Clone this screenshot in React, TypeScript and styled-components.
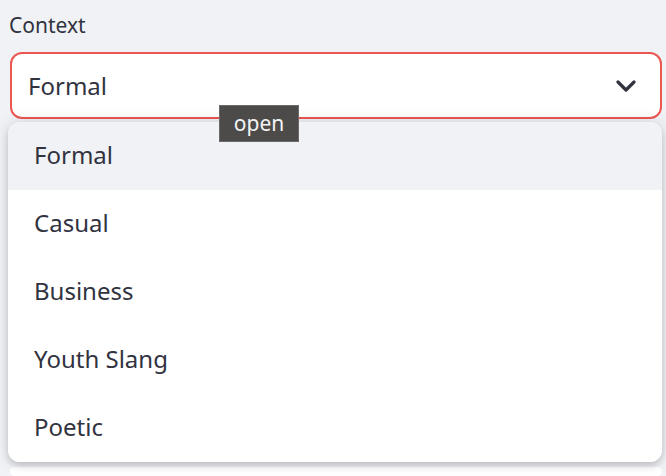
import React from "react";
import styled, { createGlobalStyle } from "styled-components";

const Global = createGlobalStyle`
  html, body { margin: 0; padding: 0; }
  body {
    background: #f0f2f6;
    font-family: "Noto Sans", "Open Sans", sans-serif;
    color: #31333f;
    overflow: hidden;
  }
`;

const Page = styled.div`
  width: 666px;
  height: 476px;
  box-sizing: border-box;
  padding: 10px 4px 0 10px;
  display: flex;
  flex-direction: column;
`;

const Label = styled.div`
  font-size: 21px;
  line-height: 30px;
  height: 30px;
  margin-bottom: 12px;
  margin-left: -1px;
`;

const Field = styled.div`
  position: relative;
`;

const SelectBox = styled.div`
  box-sizing: border-box;
  height: 67px;
  border: 2px solid #ec5651;
  border-radius: 12px;
  background: #ffffff;
  display: flex;
  align-items: center;
  justify-content: space-between;
  padding: 0 24px 0 16px;
  font-size: 24px;
`;

const Chevron = () => (
  <svg width="20" height="12" viewBox="0 0 20 12" fill="none">
    <path d="M2 2 L10 10 L18 2" stroke="#31333f" strokeWidth="3.2" strokeLinecap="round" strokeLinejoin="round" />
  </svg>
);

const Menu = styled.ul`
  position: absolute;
  top: 70px;
  left: -2px;
  right: 0;
  margin: 0;
  padding: 0;
  list-style: none;
  background: #ffffff;
  border-radius: 12px;
  overflow: hidden;
  box-shadow: 0 0 16px rgba(0, 0, 0, 0.13), 0 4px 6px rgba(0, 0, 0, 0.14);
  z-index: 2;
`;

const Option = styled.li<{ $active?: boolean }>`
  box-sizing: border-box;
  height: 68px;
  display: flex;
  align-items: center;
  padding: 0 0 4px 26px;
  font-size: 24px;
  background: ${(p) => (p.$active ? "#f0f2f6" : "#ffffff")};
`;

const Tooltip = styled.div`
  position: absolute;
  top: 53px;
  left: 209px;
  width: 80px;
  height: 37px;
  box-sizing: border-box;
  background: #4c4b49;
  border: 1px solid #6b6a68;
  color: #f4f4f4;
  font-size: 21px;
  display: flex;
  align-items: center;
  justify-content: center;
  padding-bottom: 1px;
  z-index: 3;
`;

const NextWidget = styled.div`
  margin-top: 348px;
  height: 60px;
  background: #ffffff;
  border-radius: 12px;
`;

const options = ["Formal", "Casual", "Business", "Youth Slang", "Poetic"];

export default function App() {
  return (
    <>
      <Global />
      <Page>
        <Label>Context</Label>
        <Field>
          <SelectBox>
            <span>Formal</span>
            <Chevron />
          </SelectBox>
          <Tooltip>open</Tooltip>
          <Menu>
            {options.map((o, i) => (
              <Option key={o} $active={i === 0}>
                {o}
              </Option>
            ))}
          </Menu>
        </Field>
        <NextWidget />
      </Page>
    </>
  );
}
